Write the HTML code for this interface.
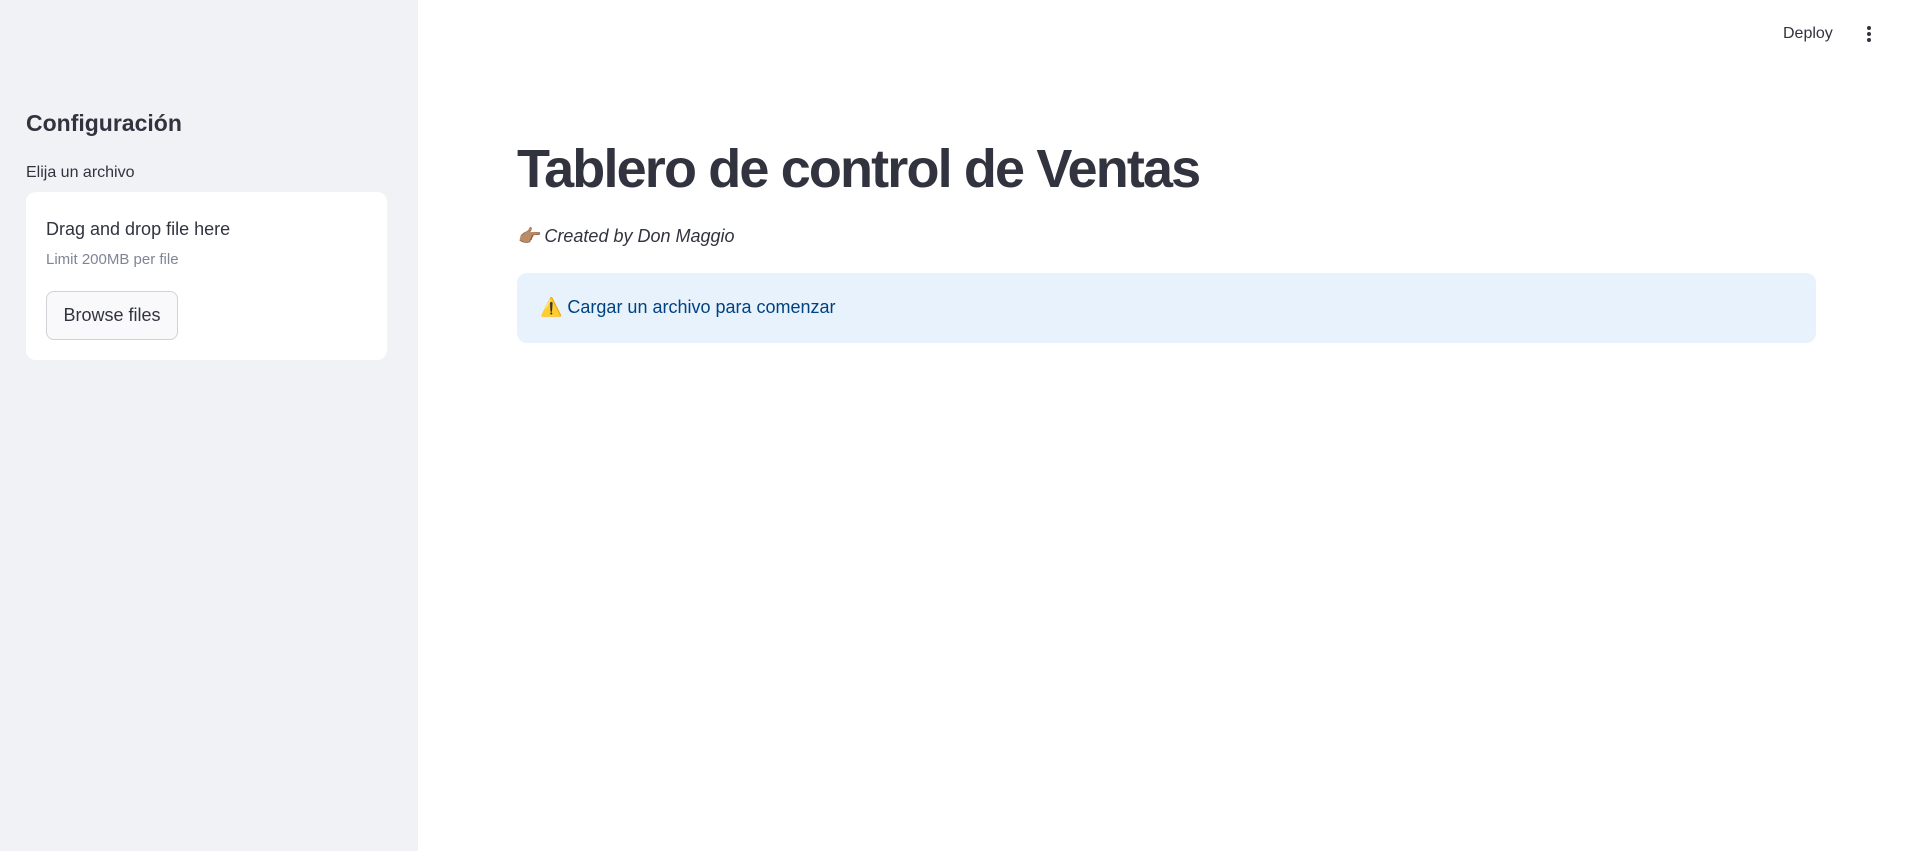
<!DOCTYPE html>
<html><head><meta charset="utf-8"><style>
*{margin:0;padding:0;box-sizing:border-box}
body{width:1905px;height:851px;overflow:hidden;background:#fff;font-family:"Liberation Sans",sans-serif;color:#31333f;position:relative}
.sb{position:absolute;left:0;top:0;width:418px;height:851px;background:#f0f2f6}
.a{position:absolute;white-space:nowrap}
</style></head><body>
<div class="sb">
<div class="a" style="left:26px;top:110px;font-size:23px;font-weight:bold">Configuración</div>
<div class="a" style="left:26px;top:164px;font-size:16px">Elija un archivo</div>
<div class="a" style="left:26px;top:192px;width:361px;height:168px;background:#fff;border-radius:10px">
<div class="a" style="left:20px;top:27px;font-size:18px">Drag and drop file here</div>
<div class="a" style="left:20px;top:59px;font-size:15px;color:#808495">Limit 200MB per file</div>
<div class="a" style="left:20px;top:99px;width:132px;height:49px;border:1px solid #d0d2d8;border-radius:8px;background:#f9f9fb;font-size:18px;line-height:47px;text-align:center">Browse files</div>
</div>
</div>
<div class="a" style="left:517px;top:138px;font-size:54px;font-weight:bold;letter-spacing:-1.85px">Tablero de control de Ventas</div>
<div class="a" style="left:517px;top:226px;font-size:18px;font-style:italic">👉🏽 Created by Don Maggio</div>
<div class="a" style="left:517px;top:273px;width:1299px;height:70px;background:#e8f2fc;border-radius:10px">
<div class="a" style="left:23px;top:24px;font-size:18px;color:#004280">⚠️ Cargar un archivo para comenzar</div>
</div>
<div class="a" style="left:1783px;top:25px;font-size:16px">Deploy</div>
<div class="a" style="left:1867px;top:26px;width:5px">
<div style="width:4px;height:4px;border-radius:50%;background:#31333f;margin-bottom:2px"></div>
<div style="width:4px;height:4px;border-radius:50%;background:#31333f;margin-bottom:2px"></div>
<div style="width:4px;height:4px;border-radius:50%;background:#31333f"></div>
</div>
</body></html>
